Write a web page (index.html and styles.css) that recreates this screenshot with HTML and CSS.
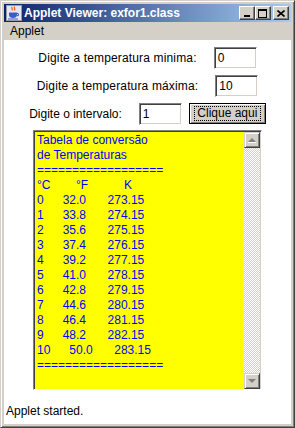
FILE: index.html
```html
<!DOCTYPE html>
<html lang="pt">
<head>
  <meta charset="UTF-8" />
  <title>Applet Viewer: exfor1.class</title>
  <link rel="stylesheet" href="styles.css">
</head>
<body>

  <div class="window">
    <div class="titlebar">
      <!-- Java cup icon -->
      <svg class="app-icon" viewBox="0 0 16 16">
        <rect x="0.5" y="0.5" width="15" height="15" fill="#e6e6ee" stroke="#9a9aa8"/>
        <path d="M6 2c-1 1 1 2 0 3.5M8.5 1.5c-1.2 1.2 1.2 2.2 0 4" fill="none" stroke="#e0601a" stroke-width="1.2"/>
        <path d="M3 7.5h8v2.5c0 2-1.6 3-4 3s-4-1-4-3z" fill="#3a5cc8"/>
        <path d="M11 8.2c2 0 2 2.6 0 2.6" fill="none" stroke="#3a5cc8" stroke-width="1.1"/>
        <rect x="2" y="13.5" width="10" height="1" fill="#3a5cc8"/>
      </svg>
      <span class="title">Applet Viewer: exfor1.class</span>
      <div class="controls">
        <span class="ctl ctl-min"><i></i></span>
        <span class="ctl ctl-max"><i></i></span>
        <span class="ctl ctl-close">
          <svg viewBox="0 0 8 7"><path d="M0.5 0.5l7 6M7.5 0.5l-7 6" stroke="#000" stroke-width="1.6"/></svg>
        </span>
      </div>
    </div>

    <div class="menubar">
      <span class="menu-item">Applet</span>
    </div>

    <div class="client">
      <div class="applet">
        <div class="row row-first">
          <label class="lbl" for="tmin">Digite a temperatura minima:</label>
          <div class="field" id="tmin">0</div>
        </div>
        <div class="row">
          <label class="lbl" for="tmax">Digite a temperatura máxima:</label>
          <div class="field" id="tmax">10</div>
        </div>
        <div class="row row-last">
          <label class="lbl lbl-short" for="tstep">Digite o intervalo:</label>
          <div class="field" id="tstep">1</div>
          <button class="btn" type="button"><span>Clique aqui</span></button>
        </div>

        <div class="textarea">
          <div class="ta-text">
            <div class="line">Tabela de conversão</div>
            <div class="line">de Temperaturas</div>
            <div class="line">==================</div>
            <div class="line head"><span class="h1">°C</span><span class="h2">°F</span><span>K</span></div>
            <div class="line"><span>0</span><span class="c2">32.0</span><span class="c3">273.15</span></div>
            <div class="line"><span>1</span><span class="c2">33.8</span><span class="c3">274.15</span></div>
            <div class="line"><span>2</span><span class="c2">35.6</span><span class="c3">275.15</span></div>
            <div class="line"><span>3</span><span class="c2">37.4</span><span class="c3">276.15</span></div>
            <div class="line"><span>4</span><span class="c2">39.2</span><span class="c3">277.15</span></div>
            <div class="line"><span>5</span><span class="c2">41.0</span><span class="c3">278.15</span></div>
            <div class="line"><span>6</span><span class="c2">42.8</span><span class="c3">279.15</span></div>
            <div class="line"><span>7</span><span class="c2">44.6</span><span class="c3">280.15</span></div>
            <div class="line"><span>8</span><span class="c2">46.4</span><span class="c3">281.15</span></div>
            <div class="line"><span>9</span><span class="c2">48.2</span><span class="c3">282.15</span></div>
            <div class="line"><span>10</span><span class="c2">50.0</span><span class="c3">283.15</span></div>
            <div class="line">==================</div>
          </div>
          <div class="scrollbar">
            <span class="arrow arrow-up"></span>
            <span class="track"></span>
            <span class="arrow arrow-down"></span>
          </div>
        </div>
      </div>

      <div class="status">Applet started.</div>
    </div>
  </div>

</body>
</html>
```

FILE: styles.css
```css
body {
  margin: 0;
  font-family: "Liberation Sans", Arial, sans-serif;
  font-size: 12px;
  background-color: #fff;
}

.window {
  width: 295px;
  height: 428px;
  box-sizing: border-box;
  background-color: #d4d0c8;
  border: 1px solid;
  border-color: #d4d0c8 #404040 #404040 #d4d0c8;
  box-shadow: inset 1px 1px #fff, inset -1px -1px #808080;
  padding: 3px;
  display: flex;
  flex-direction: column;
}

/* title bar */
.titlebar {
  height: 18px;
  background: linear-gradient(to right, #0a246a, #a6caf0);
  display: flex;
  align-items: center;
  padding: 0 2px;
}

.app-icon {
  width: 16px;
  height: 16px;
  margin-right: 2px;
}

.title {
  color: #fff;
  font-weight: bold;
  font-size: 12px;
  flex: 1;
  white-space: nowrap;
}

.controls {
  display: flex;
  align-items: center;
}

.ctl {
  width: 16px;
  height: 14px;
  box-sizing: border-box;
  background-color: #d4d0c8;
  border: 1px solid;
  border-color: #fff #404040 #404040 #fff;
  box-shadow: inset -1px -1px #808080;
  position: relative;
  display: flex;
  align-items: center;
  justify-content: center;
}

.ctl-close {
  margin-left: 2px;
}

.ctl-min i {
  width: 6px;
  height: 2px;
  background: #000;
  margin-top: 6px;
  margin-right: 1px;
}

.ctl-max i {
  width: 9px;
  height: 9px;
  box-sizing: border-box;
  border: 1px solid #000;
  border-top-width: 2px;
  margin-right: 1px;
}

.ctl-close svg {
  width: 8px;
  height: 7px;
  margin-right: 1px;
}

/* menu bar */
.menubar {
  height: 18px;
  display: flex;
  align-items: center;
}

.menu-item {
  padding-left: 6px;
  color: #000;
}

/* client area */
.client {
  flex: 1;
  background-color: #fff;
  display: flex;
  flex-direction: column;
}

.applet {
  padding-top: 7px;
  display: flex;
  flex-direction: column;
  align-items: center;
}

.row {
  display: flex;
  justify-content: center;
  align-items: flex-start;
  margin-bottom: 6px;
}

.row-last {
  margin-bottom: 5px;
}

.lbl {
  height: 22px;
  line-height: 22px;
  margin-right: 17px;
  letter-spacing: 0.15px;
}

.lbl-short {
  letter-spacing: 0;
}

.field {
  width: 43px;
  height: 22px;
  box-sizing: border-box;
  border: 1px solid;
  border-color: #808080 #fff #fff #808080;
  box-shadow: inset 1px 1px #404040, inset -1px -1px #d4d0c8;
  padding-left: 3px;
  line-height: 20px;
  color: #000;
}

.btn {
  margin-left: 7px;
  width: 77px;
  height: 21px;
  padding: 0;
  font-family: inherit;
  font-size: 12px;
  color: #000;
  background-color: #d4d0c8;
  border: 1px solid #000;
  box-shadow: inset 1px 1px #fff, inset -1px -1px #808080;
  display: flex;
  align-items: center;
  justify-content: center;
}

.btn span {
  border: 1px dotted #000;
  padding: 0 2px;
  line-height: 13px;
  width: 67px;
  box-sizing: border-box;
}

/* text area */
.textarea {
  width: 229px;
  height: 260px;
  box-sizing: border-box;
  border: 1px solid;
  border-color: #808080 #fff #fff #808080;
  box-shadow: inset 1px 1px #404040;
  padding: 1px 1px 0 1px;
  display: flex;
  background-color: #d4d0c8;
}

.ta-text {
  flex: 1;
  background-color: #ff0;
  color: #00f;
  padding: 1px 0 0 2px;
  overflow: hidden;
}

.line {
  height: 15px;
  line-height: 15px;
  white-space: pre;
}

.head .h1 {
  display: inline-block;
  width: 39px;
}

.head .h2 {
  display: inline-block;
  width: 48px;
}

.c2 {
  margin-left: 19px;
}

.c3 {
  margin-left: 21.5px;
}

.scrollbar {
  width: 16px;
  display: flex;
  flex-direction: column;
}

.track {
  flex: 1;
  background: repeating-conic-gradient(#d4d0c8 0 25%, #fff 0 50%) 0 0 / 2px 2px;
}

.arrow {
  height: 16px;
  box-sizing: border-box;
  background-color: #d4d0c8;
  border: 1px solid;
  border-color: #d4d0c8 #404040 #404040 #d4d0c8;
  box-shadow: inset 1px 1px #fff, inset -1px -1px #808080;
  display: flex;
  align-items: center;
  justify-content: center;
}

.arrow::after {
  content: "";
  width: 0;
  height: 0;
  border-left: 4px solid transparent;
  border-right: 4px solid transparent;
}

.arrow-up::after {
  border-bottom: 4px solid #808080;
  box-shadow: 0 1px #fff;
}

.arrow-down::after {
  border-top: 4px solid #808080;
}

/* status line */
.status {
  margin-top: auto;
  height: 24px;
  line-height: 22px;
  padding-left: 2px;
  color: #000;
}
```
